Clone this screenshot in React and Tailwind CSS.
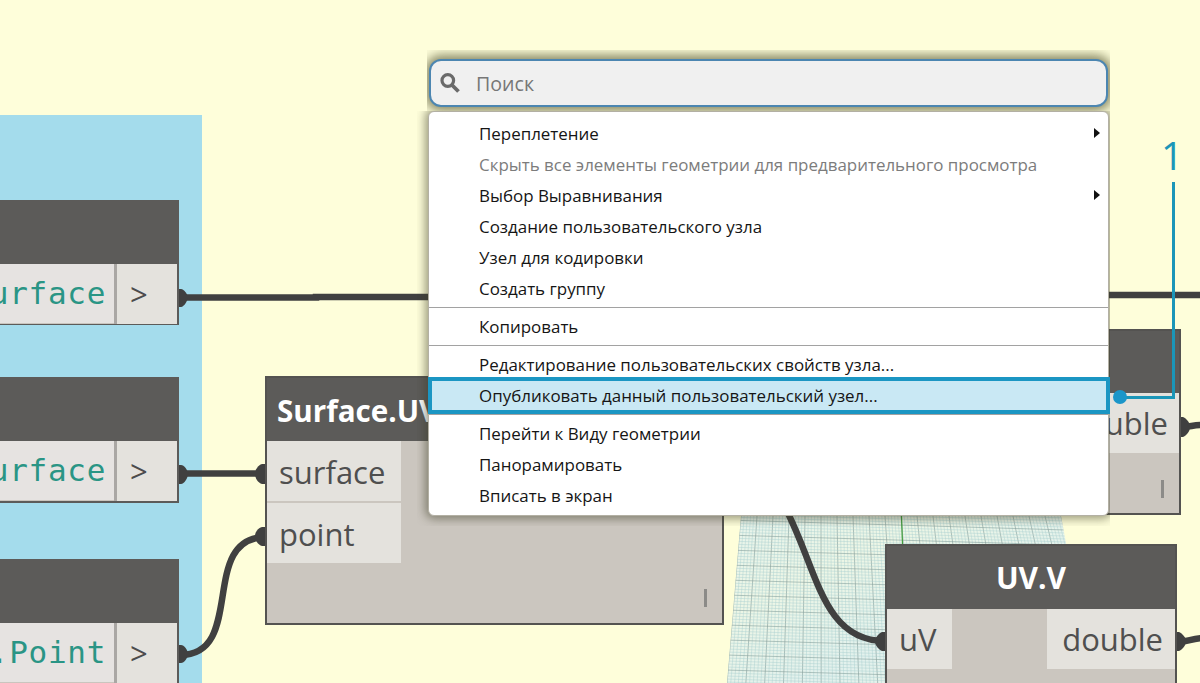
import React from "react";

const WIRE = "#404040";

/* x of a ground line at the bottom edge, given its x at the top edge. */
function spread(x) {
  return 820 + (x - 820) * 1.177;
}

/* Perspective ground grid of the 3D preview. */
function PreviewGrid() {
  const verticals = Array.from({ length: 110 }, (_, i) => i);
  const horizontals = Array.from({ length: 62 }, (_, i) => i);
  return (
    <g clipPath="url(#ground)">
      <rect x="720" y="510" width="380" height="180" fill="url(#tint)" />
      {verticals.map((i) => (
        <line
          key={i}
          x1={741 + i * 3.2}
          y1="516"
          x2={spread(741 + i * 3.2)}
          y2="683"
          stroke={i % 5 === 0 ? "#7f9a98" : "#a9d0cf"}
          strokeWidth={i % 5 === 0 ? 0.6 : 0.45}
        />
      ))}
      {horizontals.map((i) => (
        <line
          key={i}
          x1="725"
          y1={505 + i * 3}
          x2="1100"
          y2={516 + i * 3}
          stroke={i % 5 === 0 ? "#86a19e" : "#a9d0cf"}
          strokeWidth={i % 5 === 0 ? 0.6 : 0.45}
        />
      ))}
      <path d="M901.5 516L902.500 545" stroke="#3d9b3a" strokeWidth="1.2" />
    </g>
  );
}

function Wires() {
  return (
    <svg className="absolute inset-0" width="1200" height="683" viewBox="0 0 1200 683" fill="none">
      <defs>
        <clipPath id="ground">
          <path d="M741 516H1061L1069 560V683H727Z" />
        </clipPath>
        <linearGradient id="tint" x1="0" y1="0" x2="1" y2="1">
          <stop offset="0" stopColor="#e6f3ec" />
          <stop offset="0.3" stopColor="#edf6e6" />
          <stop offset="0.6" stopColor="#e2f1ed" />
          <stop offset="1" stopColor="#eef7e4" />
        </linearGradient>
      </defs>
      <PreviewGrid />
      <g stroke={WIRE} strokeWidth="6.5">
        <path d="M180 297.500H316V297H430" />
        <path d="M1105 295H1200" />
        <path d="M180 473.500H266" />
        <path d="M180 655C247 655 198 537 266 537" />
        <path d="M781 500C817 562 819 641 885 641" />
        <path d="M1181 427C1190 427 1193 425 1202 425" />
        <path d="M1177 642C1188 642 1190 639 1202 638" />
      </g>
      <g fill={WIRE}>
        <path d="M178 289H181C184 289 188 295 188 297.500C188 300 184 307 181 307H178Z" />
        <path d="M178 465H181C184 465 188 470 188 474C188 478 184 484 181 484H178Z" />
        <path d="M178 645H181C184 645 188 650 188 654C188 658 184 663 181 663H178Z" />
        <path d="M266 464H262C258 465 255 470 255 474C255 478 258 483 262 484H266Z" />
        <path d="M266 527H262C258 528 255 532 255 536C255 540 258 545 262 546H266Z" />
        <path d="M886 632H882C878 634 875 638 875 641C875 645 878 649 882 651H886Z" />
        <path d="M1180 417H1183C1187 419 1190 423 1190 427C1190 431 1187 435 1183 437H1180Z" />
        <path d="M1176 632H1179C1183 634 1186 638 1186 641C1186 645 1183 649 1179 651H1176Z" />
      </g>
    </svg>
  );
}

function CodeNode({ className, code }) {
  return (
    <section className={`absolute -left-16 w-[243px] bg-[#5c5b59] flex flex-col ${className}`}>
      <div className="h-[64px] shrink-0" />
      <div className="flex h-[60px] mr-0.5 bg-[#cac5be]">
        <div className="w-[178px] h-[59px] bg-[#e6e3e1] pr-[8px] text-right whitespace-nowrap font-['DejaVu_Sans_Mono',monospace] text-[31px] leading-[59px] tracking-[0.7px] text-[#2a9585]">
          {code}
        </div>
        <div className="w-[3px] bg-[#aaa7a4]" />
        <div className="flex-1 bg-[#e4e2dd] pl-[13px] text-[31px] leading-[61px] text-[#4c4c4c]">&gt;</div>
      </div>
    </section>
  );
}

function Port({ className, children }) {
  return <div className={`bg-[#e4e2dd] text-[31px] text-[#4f4f4f] ${className}`}>{children}</div>;
}

function Lacing({ className }) {
  return <span className={`absolute h-[18px] w-[3px] bg-[#8c8b88] ${className}`} />;
}

function Item({ children, muted, arrow, active }) {
  return (
    <li
      className={`flex h-[31px] items-center justify-between pl-[50px] pr-[8px] whitespace-nowrap ${
        muted ? "text-[#7c7c7c]" : "text-[#151515]"
      } ${active ? "bg-[#c9e8f4]" : ""}`}
    >
      <span>{children}</span>
      {arrow && (
        <svg className="mb-px" width="6" height="10" viewBox="0 0 6 10">
          <path d="M0 0L6 5L0 10Z" fill="#111" />
        </svg>
      )}
    </li>
  );
}

function Separator() {
  return (
    <li className="flex h-[7px] flex-col justify-center">
      <div className="h-[1.5px] bg-[#a2a2a2]" />
    </li>
  );
}

function ContextMenu() {
  return (
    <div className="absolute left-[417px] top-[50px] flex w-[693px] flex-col">
      <div className="ml-[10px] h-[61px] overflow-hidden pl-[2px] pt-[9px]">
        <div className="flex h-[48px] w-[679px] items-center rounded-[12px] border-2 border-[#4c86b1] bg-[#f0f0f0] pl-[9px] shadow-[0_0_11px_4px_rgba(70,70,35,0.65)]">
          <svg width="21" height="21" viewBox="0 0 21 21" fill="none" stroke="#6a6a6a">
            <circle cx="7.800" cy="7.500" r="5.800" strokeWidth="3.200" />
            <path d="M12 12L18.500 18.500" strokeWidth="3.800" />
          </svg>
          <span className="pl-[15px] pt-0.5 text-[19.6px] leading-6 text-[#777]">Поиск</span>
        </div>
      </div>
      <div className="h-[415px] overflow-hidden pl-[11px]">
        <ul className="relative h-[405px] w-[681px] rounded-[6px] border border-[#b3b0a4] bg-white pt-[6px] text-[16.93px] leading-[31px] shadow-[0_0_10px_3px_rgba(60,60,35,0.5)]">
          <Item arrow>Переплетение</Item>
          <Item muted>Скрыть все элементы геометрии для предварительного просмотра</Item>
          <Item arrow>Выбор Выравнивания</Item>
          <Item>Создание пользовательского узла</Item>
          <Item>Узел для кодировки</Item>
          <Item>Создать группу</Item>
          <Separator />
          <Item>Копировать</Item>
          <Separator />
          <Item>Редактирование пользовательских свойств узла...</Item>
          <Item active>Опубликовать данный пользовательский узел...</Item>
          <Separator />
          <Item>Перейти к Виду геометрии</Item>
          <Item>Панорамировать</Item>
          <Item>Вписать в экран</Item>
          <div className="absolute -left-px -right-0.5 top-[265px] h-[37px] border-4 border-[#1b96c3]" />
        </ul>
      </div>
    </div>
  );
}

export default function App() {
  return (
    <main className="relative h-[683px] w-[1200px] overflow-hidden bg-[#fefeda] font-['Open_Sans',sans-serif]">
      <div className="absolute left-0 top-[115px] h-[568px] w-[202px] bg-[#a4dcec]" />
      <Wires />

      <CodeNode className="top-[200px] h-[125px]" code="surface" />
      <CodeNode className="top-[377px] h-[126px]" code="surface" />
      <CodeNode className="top-[559px] h-[126px]" code="..Point" />

      <section className="absolute left-[265px] top-[376px] flex h-[249px] w-[459px] flex-col border-2 border-[#545351] bg-[#cbc6bf]">
        <h2 className="h-[63px] shrink-0 bg-[#5c5b59] pl-[10px] text-[29.6px] font-bold leading-[66px] text-white">Surface.UV</h2>
        <div className="flex w-[134px] flex-col gap-0.5">
          <Port className="h-[60px] pl-3 leading-[63px]">surface</Port>
          <Port className="h-[60px] pl-3 leading-[63px]">point</Port>
        </div>
        <Lacing className="right-[15px] top-[211px]" />
      </section>

      <section className="absolute left-[889px] top-[329px] flex h-[186px] w-[292px] flex-col border-2 border-[#545351] bg-[#cbc6bf]">
        <h2 className="h-[62px] shrink-0 bg-[#5c5b59]" />
        <Port className="h-[60px] w-[128px] self-end pr-[11px] text-right leading-[61px]">double</Port>
        <Lacing className="right-[15px] top-[149px]" />
      </section>

      <section className="absolute left-[885px] top-[544px] flex h-[186px] w-[292px] flex-col border-2 border-[#545351] bg-[#cbc6bf]">
        <h2 className="h-[63px] shrink-0 bg-[#5c5b59] text-center text-[30px] font-bold leading-[63px] text-white">UV.V</h2>
        <div className="flex justify-between">
          <Port className="h-[60px] w-[65px] pl-3 leading-[61px]">uV</Port>
          <Port className="h-[60px] w-[128px] pr-3 text-right leading-[61px]">double</Port>
        </div>
      </section>

      <ContextMenu />

      <div className="absolute left-[1161px] top-[130px] text-[39px] leading-[50px] text-[#1b96b8]">1</div>
      <svg className="absolute left-[1110px] top-[180px]" width="70" height="230" viewBox="0 0 70 230" fill="none">
        <path d="M63.500 2V217.500H10" stroke="#1b96b8" strokeWidth="3" />
        <circle cx="10" cy="217" r="7" fill="#1b96c9" />
      </svg>
    </main>
  );
}
